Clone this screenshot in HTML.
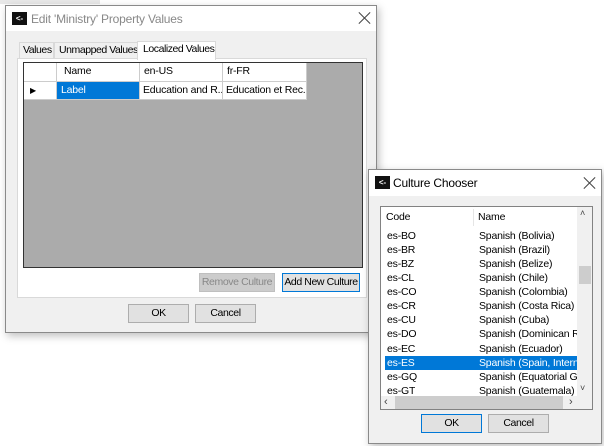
<!DOCTYPE html>
<html><head><style>
*{box-sizing:border-box;margin:0;padding:0}
body{width:604px;height:446px;background:#fff;position:relative;overflow:hidden;font-family:"Liberation Sans",sans-serif;font-size:10.5px;color:#000;white-space:nowrap;letter-spacing:-0.2px}
.abs{position:absolute}
.dlg{position:absolute;background:#f0f0f0;border:1px solid #8a8a8a;box-shadow:2px 3px 8px rgba(0,0,0,.25)}
.title{position:absolute;left:0;top:0;right:0;height:25px;background:#fff}
.icon{position:absolute;width:15px;height:13px;background:#111;color:#fff;font-size:8px;line-height:13px;text-align:center;font-weight:bold;letter-spacing:0}
.btn{position:absolute;height:19px;background:#e1e1e1;border:1px solid #adadad;text-align:center;line-height:17px;letter-spacing:-0.4px}
.cell{position:absolute;background:#fff;border-right:1px solid #ccc;border-bottom:1px solid #ccc;line-height:17px;padding-left:4px;overflow:hidden}
.row{position:absolute;left:4px;width:193px;height:14px;line-height:14px}
.row span{position:absolute;overflow:hidden}
.row span+span{width:98px}
.tab{letter-spacing:-0.45px}
.x{position:absolute;width:12px;height:12px}
.x:before,.x:after{content:"";position:absolute;left:5px;top:-2px;width:1px;height:16px;background:#444;transform:rotate(45deg)}
.x:after{transform:rotate(-45deg)}
</style></head><body>
<div class="abs" style="left:0;top:0;width:100px;height:4px;background:#e8e8e8"></div>
<!-- Dialog 1 -->
<div class="dlg" style="left:5px;top:5px;width:372px;height:328px">
 <div class="title">
  <div class="icon" style="left:6px;top:6px">&lt;-</div>
  <div class="abs" style="left:25px;top:6px;font-size:12px;color:#888">Edit 'Ministry' Property Values</div>
  <div class="x" style="left:353px;top:6px"></div>
 </div>
 <div class="abs tab" style="left:13px;top:36px;width:35px;height:17px;border:1px solid #d9d9d9;border-bottom:none;line-height:15px;padding-left:3px">Values</div>
 <div class="abs tab" style="left:48px;top:36px;width:84px;height:17px;border:1px solid #d9d9d9;border-bottom:none;line-height:15px;padding-left:4px">Unmapped Values</div>
 <div class="abs tab" style="left:131px;top:35px;width:79px;height:19px;border:1px solid #d9d9d9;border-bottom:none;background:#fff;line-height:15px;padding-left:5px;z-index:2">Localized Values</div>
 <div class="abs" style="left:11px;top:52px;width:350px;height:240px;background:#fff;border:1px solid #d9d9d9"></div>
 <div class="abs" style="left:17px;top:56px;width:340px;height:206px;background:#ababab;border:1px solid #333"></div>
 <div class="cell" style="left:18px;top:57px;width:33px;height:19px"></div>
 <div class="cell" style="left:51px;top:57px;width:83px;height:19px;padding-left:7px">Name</div>
 <div class="cell" style="left:134px;top:57px;width:83px;height:19px">en-US</div>
 <div class="cell" style="left:217px;top:57px;width:84px;height:19px">fr-FR</div>
 <div class="cell" style="left:18px;top:76px;width:33px;height:18px;font-size:8px;padding-left:6px">▶</div>
 <div class="cell" style="left:51px;top:76px;width:83px;height:18px;background:#0078d7;color:#fff">Label</div>
 <div class="cell" style="left:134px;top:76px;width:83px;height:18px;padding-left:3px">Education and R...</div>
 <div class="cell" style="left:217px;top:76px;width:84px;height:18px;padding-left:3px">Education et Rec...</div>
 <div class="btn" style="left:193px;top:267px;width:76px;color:#888;background:#ccc;border-color:#bfbfbf">Remove Culture</div>
 <div class="btn" style="left:276px;top:267px;width:78px;border:1px solid #0078d7">Add New Culture</div>
 <div class="btn" style="left:122px;top:298px;width:61px">OK</div>
 <div class="btn" style="left:189px;top:298px;width:61px">Cancel</div>
</div>
<!-- Dialog 2 -->
<div class="dlg" style="left:368px;top:169px;width:234px;height:275px">
 <div class="title" style="height:26px">
  <div class="icon" style="left:6px;top:6px">&lt;-</div>
  <div class="abs" style="left:24px;top:6px;font-size:12px">Culture Chooser</div>
  <div class="x" style="left:215px;top:7px"></div>
 </div>
 <div class="abs" style="left:11px;top:36px;width:213px;height:204px;background:#fff;border:1px solid #828282;overflow:hidden">
  <div class="abs" style="left:5px;top:4px">Code</div>
  <div class="abs" style="left:92px;top:2px;width:1px;height:17px;background:#e5e5e5"></div>
  <div class="abs" style="left:97px;top:4px">Name</div>
  <div class="row" style="top:22px"><span style="left:2px">es-BO</span><span style="left:94px">Spanish (Bolivia)</span></div>
  <div class="row" style="top:36px"><span style="left:2px">es-BR</span><span style="left:94px">Spanish (Brazil)</span></div>
  <div class="row" style="top:50px"><span style="left:2px">es-BZ</span><span style="left:94px">Spanish (Belize)</span></div>
  <div class="row" style="top:64px"><span style="left:2px">es-CL</span><span style="left:94px">Spanish (Chile)</span></div>
  <div class="row" style="top:78px"><span style="left:2px">es-CO</span><span style="left:94px">Spanish (Colombia)</span></div>
  <div class="row" style="top:92px"><span style="left:2px">es-CR</span><span style="left:94px">Spanish (Costa Rica)</span></div>
  <div class="row" style="top:106px"><span style="left:2px">es-CU</span><span style="left:94px">Spanish (Cuba)</span></div>
  <div class="row" style="top:120px"><span style="left:2px">es-DO</span><span style="left:94px">Spanish (Dominican Re...</span></div>
  <div class="row" style="top:135px"><span style="left:2px">es-EC</span><span style="left:94px">Spanish (Ecuador)</span></div>
  <div class="row" style="top:149px;background:#0078d7;color:#fff"><span style="left:2px">es-ES</span><span style="left:94px">Spanish (Spain, Internati.</span></div>
  <div class="row" style="top:163px"><span style="left:2px">es-GQ</span><span style="left:94px">Spanish (Equatorial Gui...</span></div>
  <div class="row" style="top:177px"><span style="left:2px">es-GT</span><span style="left:94px">Spanish (Guatemala)</span></div>
  <div class="abs" style="left:196px;top:0;width:16px;height:189px;background:#f0f0f0"></div>
  <div class="abs" style="left:199px;top:1px;font-size:9px;color:#444">˄</div>
  <div class="abs" style="left:198px;top:59px;width:12px;height:18px;background:#cdcdcd"></div>
  <div class="abs" style="left:199px;top:176px;font-size:9px;color:#444">˅</div>
  <div class="abs" style="left:0;top:189px;width:212px;height:14px;background:#f0f0f0"></div>
  <div class="abs" style="left:14px;top:189px;width:168px;height:14px;background:#cdcdcd"></div>
  <div class="abs" style="left:3px;top:189px;font-size:11px;color:#444">‹</div>
  <div class="abs" style="left:188px;top:189px;font-size:11px;color:#444">›</div>
 </div>
 <div class="btn" style="left:52px;top:244px;width:61px;border:1px solid #0078d7">OK</div>
 <div class="btn" style="left:119px;top:244px;width:61px">Cancel</div>
</div>
</body></html>
